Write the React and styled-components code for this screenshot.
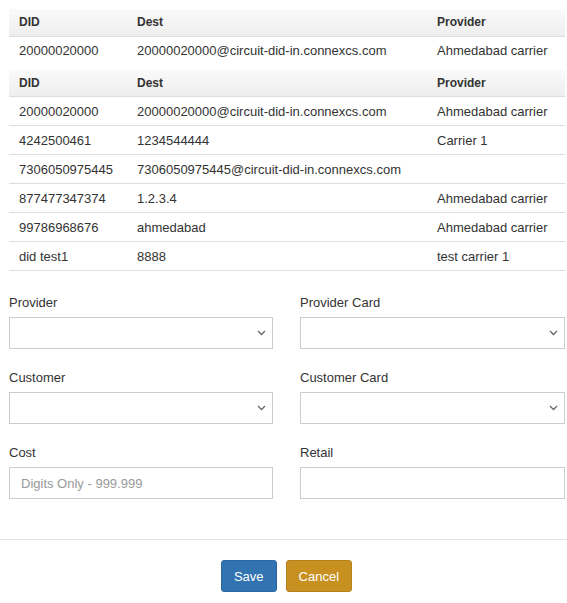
import React from 'react';
import styled, { createGlobalStyle } from 'styled-components';

const GlobalStyle = createGlobalStyle`
  body {
    margin: 0;
    background: #fff;
    font-family: "Liberation Sans", Arial, sans-serif;
    font-size: 13px;
    color: #333;
  }
`;

const Page = styled.div`
  width: 567px;
`;

const Body = styled.div`
  padding: 9px 2px 0 9px;
`;

const Table = styled.table`
  width: 100%;
  border-collapse: collapse;
  table-layout: fixed;
  margin-bottom: ${p => p.gap || 0}px;
`;

const Th = styled.th`
  box-sizing: border-box;
  height: 27px;
  padding: 0 10px;
  text-align: left;
  font-size: 12px;
  font-weight: bold;
  color: #333;
  background: linear-gradient(#fafafa, #eeeeee);
  border-bottom: 1px solid #dddddd;
  width: ${p => (p.w ? `${p.w}px` : 'auto')};
`;

const Td = styled.td`
  height: 28px;
  padding: 0 10px;
  white-space: nowrap;
  overflow: hidden;
  color: #333;
  border-bottom: ${p => (p.plain ? 'none' : '1px solid #dddddd')};
`;

const Form = styled.div`
  display: grid;
  grid-template-columns: 264px 265px;
  column-gap: 27px;
  row-gap: 20px;
  margin-top: 23px;
`;

const Group = styled.div`
  display: flex;
  flex-direction: column;
`;

const Label = styled.label`
  line-height: 18px;
  margin-bottom: 5px;
  color: #333;
`;

const SelectBox = styled.div`
  height: 32px;
  box-sizing: border-box;
  border: 1px solid #cccccc;
  display: flex;
  align-items: center;
  justify-content: flex-end;
  padding-right: 6px;
`;

const Input = styled.input`
  height: 32px;
  box-sizing: border-box;
  border: 1px solid #cccccc;
  padding: 0 11px;
  font-family: inherit;
  font-size: 13px;
  color: #555;
  outline: none;
  &::placeholder {
    color: #999;
  }
`;

const Footer = styled.div`
  margin-top: 40px;
  border-top: 1px solid #e5e5e5;
  padding: 20px 0 11px;
  display: flex;
  justify-content: center;
  gap: 9px;
  padding-left: 6px;
`;

const Button = styled.button`
  height: 32px;
  padding: 0 12px;
  font-family: inherit;
  font-size: 13px;
  color: #fff;
  border-radius: 3px;
  background: ${p => (p.kind === 'warn' ? '#c79021' : '#3174b1')};
  border: 1px solid ${p => (p.kind === 'warn' ? '#b4821c' : '#2c68a0')};
`;

const Chevron = () => (
  <svg width="9" height="6" viewBox="0 0 9 6">
    <path d="M1 1 L4.5 4.5 L8 1" fill="none" stroke="#666" strokeWidth="1.3" />
  </svg>
);

const rows = [
  ['20000020000', '20000020000@circuit-did-in.connexcs.com', 'Ahmedabad carrier'],
  ['4242500461', '1234544444', 'Carrier 1'],
  ['7306050975445', '7306050975445@circuit-did-in.connexcs.com', ''],
  ['877477347374', '1.2.3.4', 'Ahmedabad carrier'],
  ['99786968676', 'ahmedabad', 'Ahmedabad carrier'],
  ['did test1', '8888', 'test carrier 1'],
];

const Head = () => (
  <thead>
    <tr>
      <Th w={118}>DID</Th>
      <Th w={300}>Dest</Th>
      <Th>Provider</Th>
    </tr>
  </thead>
);

export default function App() {
  return (
    <Page>
      <GlobalStyle />
      <Body>
        <Table gap={5}>
          <Head />
          <tbody>
            <tr>
              <Td plain>20000020000</Td>
              <Td plain>20000020000@circuit-did-in.connexcs.com</Td>
              <Td plain>Ahmedabad carrier</Td>
            </tr>
          </tbody>
        </Table>
        <Table>
          <Head />
          <tbody>
            {rows.map((r, i) => (
              <tr key={i}>
                {r.map((c, j) => (
                  <Td key={j}>{c}</Td>
                ))}
              </tr>
            ))}
          </tbody>
        </Table>
        <Form>
          <Group>
            <Label>Provider</Label>
            <SelectBox><Chevron /></SelectBox>
          </Group>
          <Group>
            <Label>Provider Card</Label>
            <SelectBox><Chevron /></SelectBox>
          </Group>
          <Group>
            <Label>Customer</Label>
            <SelectBox><Chevron /></SelectBox>
          </Group>
          <Group>
            <Label>Customer Card</Label>
            <SelectBox><Chevron /></SelectBox>
          </Group>
          <Group>
            <Label>Cost</Label>
            <Input placeholder="Digits Only - 999.999" />
          </Group>
          <Group>
            <Label>Retail</Label>
            <Input />
          </Group>
        </Form>
      </Body>
      <Footer>
        <Button>Save</Button>
        <Button kind="warn">Cancel</Button>
      </Footer>
    </Page>
  );
}
